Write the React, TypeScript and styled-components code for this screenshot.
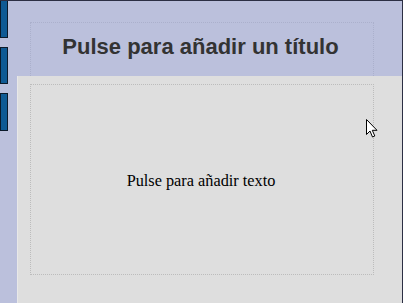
import React from "react";
import styled, { createGlobalStyle } from "styled-components";

const Global = createGlobalStyle`
  html, body { margin: 0; padding: 0; background: #bbc0dc; }
  #root { width: 403px; height: 303px; }
`;

const Frame = styled.div`
  position: relative;
  width: 403px;
  height: 303px;
  box-sizing: border-box;
  display: flex;
  background: #bbc0dc;
  border-top: 1px solid #2c2f44;
  border-right: 1px solid #2c2f44;
  overflow: hidden;
`;

const TabRail = styled.div`
  width: 8px;
  display: flex;
  flex-direction: column;
  gap: 9px;
  margin-top: -1px;
`;

const Tab = styled.div<{ $h: number }>`
  width: 8px;
  height: ${(p) => p.$h}px;
  box-sizing: border-box;
  background: #0f5a94;
  border: 1px solid #0b1a2a;
`;

const Gutter = styled.div`
  width: 9px;
`;

const Main = styled.div`
  flex: 1;
  display: flex;
  flex-direction: column;
`;

const TitleArea = styled.div`
  height: 75px;
  box-sizing: border-box;
  padding: 21px 28px 0 13px;
  display: flex;
`;

const TitleBox = styled.div`
  flex: 1;
  border: 1px dotted #abb0cc;
  border-bottom: none;
  display: flex;
  justify-content: center;
  padding-top: 11px;
  padding-right: 3px;
  font-family: "Liberation Sans", Arial, sans-serif;
  font-weight: bold;
  font-size: 22px;
  color: #333333;
  line-height: 26px;
`;

const Panel = styled.div`
  flex: 1;
  background: #dedede;
  border-left: 1px solid #e8e8e8;
  padding: 8px 28px 28px 12px;
  display: flex;
`;

const TextBox = styled.div`
  flex: 1;
  border: 1px dotted #bcbcbc;
  display: flex;
  align-items: center;
  justify-content: center;
  font-family: "Liberation Serif", "Times New Roman", serif;
  font-size: 16.3px;
  color: #000;
  padding-top: 2px;
  padding-right: 2px;
`;

const Cursor = styled.svg`
  position: absolute;
  left: 366px;
  top: 118px;
`;

export default function App() {
  return (
    <>
      <Global />
      <Frame>
        <TabRail>
          <Tab $h={38} />
          <Tab $h={37} />
          <Tab $h={38} />
        </TabRail>
        <Gutter />
        <Main>
          <TitleArea>
            <TitleBox>Pulse para añadir un título</TitleBox>
          </TitleArea>
          <Panel>
            <TextBox>Pulse para añadir texto</TextBox>
          </Panel>
        </Main>
        <Cursor width="13" height="20" viewBox="0 0 13 20">
          <path
            d="M0.5 0.5 L0.5 15.5 L4 12 L6.5 18 L8.8 17 L6.3 11.3 L11 11.3 Z"
            fill="#fff"
            stroke="#000"
            strokeWidth="1"
            strokeLinejoin="miter"
          />
        </Cursor>
      </Frame>
    </>
  );
}
